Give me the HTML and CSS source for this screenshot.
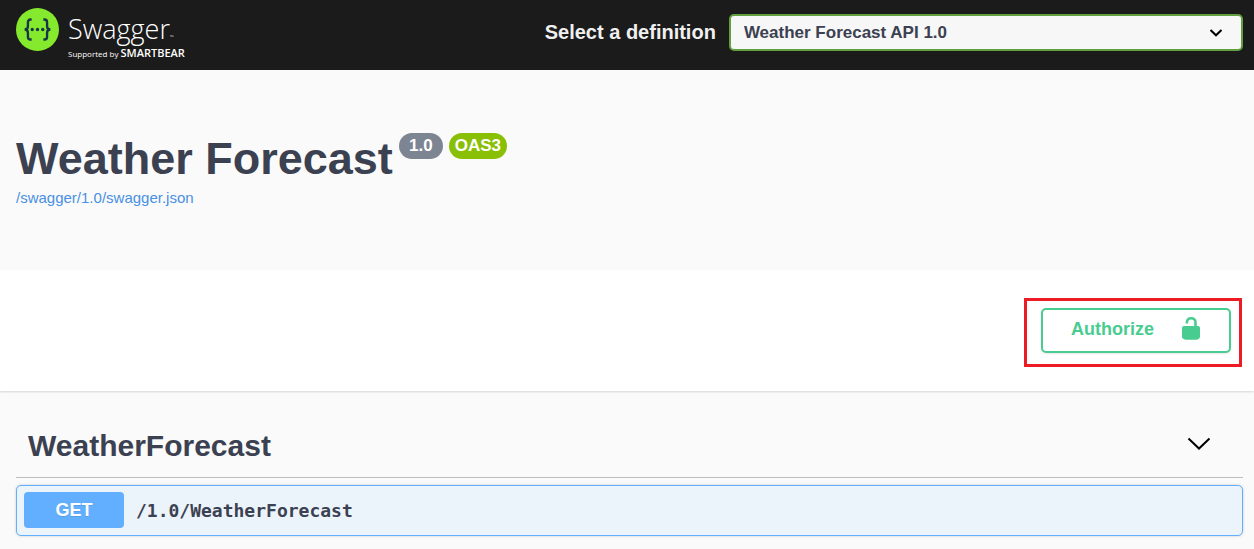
FILE: index.html
```html
<!DOCTYPE html>
<html lang="en">
<head>
<meta charset="utf-8">
<meta name="viewport" content="width=device-width, initial-scale=1">
<title>Swagger UI</title>
<link rel="stylesheet" href="styles.css">
</head>
<body>
<header class="topbar">
  <a class="brand" href="#">
    <svg class="brand-mark" viewBox="0 0 44 44" aria-hidden="true">
      <circle cx="22" cy="22" r="22" fill="#85ea2d"/>
      <g fill="none" stroke="#173647" stroke-width="2.4">
        <path d="M16 11.800h-1.200q-2.600 0-2.600 2.800v4q0 3.400-3.400 3.400q3.400 0 3.400 3.400v4q0 2.800 2.600 2.800H16"/>
        <path d="M28 11.800h1.200q2.600 0 2.600 2.800v4q0 3.400 3.400 3.400q-3.400 0-3.400 3.400v4q0 2.800-2.600 2.800H28"/>
      </g>
      <g fill="#173647"><circle cx="16.600" cy="22" r="1.700"/><circle cx="22" cy="22" r="1.700"/><circle cx="27.400" cy="22" r="1.700"/></g>
    </svg>
    <span class="brand-text">
      <span class="brand-name">Swagger<small class="brand-tm">™</small></span>
      <span class="brand-support">Supported by <b class="brand-owner">SMARTBEAR</b></span>
    </span>
  </a>
  <form class="definition">
    <label class="definition-label" for="definition">Select a definition</label>
    <select class="definition-select" id="definition">
      <option>Weather Forecast API 1.0</option>
    </select>
    <svg class="definition-arrow" viewBox="0 0 14 8" aria-hidden="true"><path d="M1.500 1 7 6.300 12.500 1" fill="none" stroke="#000" stroke-width="2"/></svg>
  </form>
</header>
<main>
  <section class="info">
    <div class="heading">
      <h1 class="title">Weather Forecast</h1>
      <span class="badge">1.0</span>
      <span class="badge badge-oas">OAS3</span>
    </div>
    <a class="spec-link" href="#">/swagger/1.0/swagger.json</a>
  </section>
  <section class="schemes">
    <div class="highlight">
      <button class="authorize" type="button">
        <span>Authorize</span>
        <svg class="lock" viewBox="0 0 20 24" aria-hidden="true">
          <path d="M1 11Q1 9 3 9H17Q19 9 19 11V19.500Q19 22 15.500 22.700H4.500Q1 22 1 19.500Z" fill="#49cc90"/>
          <path d="M5.900 6.500V5.500Q5.900 1.300 10.200 1.300T14.500 5.500V10" fill="none" stroke="#49cc90" stroke-width="2.600"/>
        </svg>
      </button>
    </div>
  </section>
  <section class="operations">
    <div class="tag">
      <h2 class="tag-name">WeatherForecast</h2>
      <button class="tag-toggle" type="button" aria-label="Collapse WeatherForecast">
        <svg class="tag-arrow" viewBox="0 0 24 14" aria-hidden="true"><path d="M1.500 1.500 12 11.500 22.500 1.500" fill="none" stroke="#000" stroke-width="2"/></svg>
      </button>
    </div>
    <button class="operation" type="button">
      <span class="method">GET</span>
      <span class="path">/1.0/WeatherForecast</span>
    </button>
  </section>
</main>
</body>
</html>
```
FILE: styles.css
```css
* { box-sizing: border-box; }

body {
  margin: 0;
  background: #fafafa;
  color: #3b4151;
  font-family: "Liberation Sans", Arial, sans-serif;
}

button { font: inherit; color: inherit; cursor: pointer; }

.topbar {
  display: flex;
  align-items: flex-start;
  justify-content: space-between;
  min-height: 70px;
  padding: 8px 11px 2px 16px;
  background: #1b1b1b;
}

.brand {
  display: flex;
  gap: 9px;
  color: #fff;
  font-family: "Open Sans", sans-serif;
  text-decoration: none;
}

.brand-mark { width: 43px; height: 43px; }

.brand-text { display: flex; flex-direction: column; gap: 3px; padding-top: 6px; }

.brand-name { font-size: 27px; font-weight: 300; line-height: 30px; }

.brand-tm { font-size: 5px; line-height: 1; }

.brand-support { font-size: 8px; line-height: 12px; white-space: nowrap; }

.brand-owner { font-size: 11px; font-weight: 600; line-height: 1; }

.definition {
  position: relative;
  display: flex;
  align-items: center;
  gap: 13px;
  height: 43px;
  padding-top: 6px;
}

.definition-label {
  color: #f0f0f0;
  font-size: 20px;
  font-weight: 700;
  white-space: nowrap;
}

.definition-select {
  appearance: none;
  width: 41vw;
  height: 37px;
  padding: 0 40px 0 13px;
  border: 2px solid #62a03f;
  border-radius: 5px;
  background: #f7f7f7;
  color: #3b4151;
  font: 700 17px "Liberation Sans", Arial, sans-serif;
}

.definition-arrow {
  position: absolute;
  right: 20px;
  bottom: 14px;
  width: 14px;
  height: 8px;
  pointer-events: none;
}

.info { padding: 62px 16px; }

.heading { display: flex; align-items: flex-start; gap: 6px; }

.title { margin: 0; font-size: 45px; line-height: 54px; }

.badge {
  min-width: 44px;
  margin-top: 1px;
  border-radius: 13px;
  background: #7d8492;
  color: #fff;
  font-size: 17px;
  font-weight: 700;
  line-height: 26px;
  text-align: center;
}

.badge-oas { min-width: 58px; background: #89bf04; }

.spec-link {
  display: block;
  width: fit-content;
  padding-top: 2px;
  color: #4990e2;
  font-size: 15px;
  line-height: 20px;
  text-decoration: none;
}

.schemes {
  display: flex;
  justify-content: flex-end;
  padding: 28px 12px 24px;
  background: #fff;
  box-shadow: 0 1px 2px rgba(0, 0, 0, 0.15);
}

.highlight { padding: 7px 8px 11px 14px; border: 3px solid #ed1c24; }

.authorize {
  display: flex;
  align-items: center;
  gap: 27px;
  height: 45px;
  padding: 0 28px 3px;
  border: 2px solid #49cc90;
  border-radius: 5px;
  background: transparent;
  box-shadow: 0 1px 2px rgba(0, 0, 0, 0.1);
  color: #49cc90;
  font-size: 18px;
  font-weight: 700;
}

.lock { width: 20px; height: 24px; }

.operations { padding: 27px 11px 13px 16px; }

.tag {
  display: flex;
  align-items: center;
  justify-content: space-between;
  margin-bottom: 7px;
  padding: 6px 32px 9px 12px;
  border-bottom: 1px solid #bcbec2;
}

.tag-name { margin: 0; font-size: 30px; line-height: 44px; }

.tag-toggle {
  display: flex;
  padding: 0 0 4px;
  border: 0;
  background: none;
}

.tag-arrow { width: 24px; height: 14px; }

.operation {
  display: flex;
  align-items: center;
  gap: 12px;
  width: 100%;
  padding: 6px 7px 7px;
  border: 1px solid #61affe;
  border-radius: 5px;
  background: #ebf3fb;
  box-shadow: 0 0 3px rgba(0, 0, 0, 0.19);
}

.method {
  width: 100px;
  border-radius: 4px;
  background: #61affe;
  color: #fff;
  font-size: 18px;
  font-weight: 700;
  line-height: 36px;
  text-align: center;
  text-shadow: 0 1px 0 rgba(0, 0, 0, 0.1);
}

.path {
  font-family: "DejaVu Sans Mono", monospace;
  font-size: 18px;
  font-weight: 700;
}
```
